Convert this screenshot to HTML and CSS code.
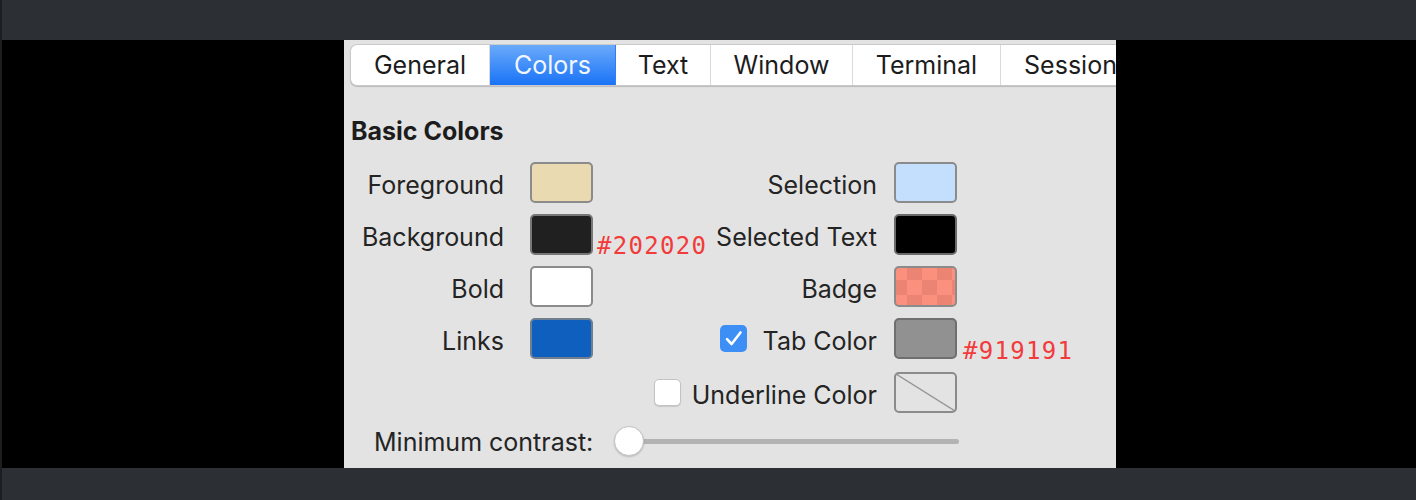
FILE: index.html
```html
<!DOCTYPE html>
<html lang="en">
<head>
<meta charset="utf-8">
<title>Colors</title>
<link rel="stylesheet" href="styles.css">
</head>
<body>
<div class="screen">
  <div class="bar"></div>
  <div class="stage">
    <div class="panel">
      <div class="tabs">
        <div class="tab tab--general">General</div>
        <div class="tab tab--colors tab--active">Colors</div>
        <div class="tab tab--text">Text</div>
        <div class="tab tab--window">Window</div>
        <div class="tab tab--terminal">Terminal</div>
        <div class="tab tab--session">Session</div>
      </div>

      <div class="heading">Basic Colors</div>

      <div class="row">
        <div class="label">Foreground</div>
        <div class="swatch swatch--fg"></div>
        <div class="mid"><span class="rlabel">Selection</span></div>
        <div class="swatch swatch--sel"></div>
      </div>

      <div class="row">
        <div class="label">Background</div>
        <div class="swatch swatch--bg"></div>
        <div class="mid">
          <span class="note note--before">#202020</span>
          <span class="rlabel">Selected Text</span>
        </div>
        <div class="swatch swatch--seltext"></div>
      </div>

      <div class="row">
        <div class="label">Bold</div>
        <div class="swatch swatch--bold"></div>
        <div class="mid"><span class="rlabel">Badge</span></div>
        <div class="swatch swatch--badge"></div>
      </div>

      <div class="row row--gap">
        <div class="label">Links</div>
        <div class="swatch swatch--links"></div>
        <div class="mid">
          <span class="check check--on">
            <svg viewBox="0 0 27 27" width="27" height="27"><path d="M7 14.2 L11.6 19 L20.5 7.5" fill="none" stroke="#fff" stroke-width="2.6" stroke-linecap="round" stroke-linejoin="round"/></svg>
          </span>
          <span class="rlabel">Tab Color</span>
        </div>
        <div class="swatch swatch--tab"></div>
        <span class="note note--after">#919191</span>
      </div>

      <div class="row">
        <div class="spacer"></div>
        <div class="mid">
          <span class="check check--off"></span>
          <span class="rlabel">Underline Color</span>
        </div>
        <div class="swatch swatch--none"></div>
      </div>

      <div class="slider-row">
        <span class="slider-label">Minimum contrast:</span>
        <div class="slider">
          <div class="track"></div>
          <div class="knob"></div>
        </div>
      </div>
    </div>
  </div>
  <div class="bar bar--bottom"></div>
</div>
</body>
</html>
```
FILE: styles.css
```css
html, body {
  margin: 0;
  padding: 0;
}

body {
  background: #000;
  font-family: Inter, "Noto Sans", sans-serif;
  color: #242424;
}

.screen {
  width: 1416px;
  height: 500px;
  box-sizing: border-box;
  border-left: 2px solid #1c1e22;
  display: flex;
  flex-direction: column;
}

.bar {
  height: 40px;
  flex: none;
  background: #2c2f34;
}

.bar--bottom {
  height: 32px;
}

.stage {
  flex: 1;
  background: #000;
  padding-left: 342px;
}

.panel {
  width: 772px;
  height: 428px;
  background: #e3e3e3;
  overflow: hidden;
}

/* Tabs */
.tabs {
  display: flex;
  width: max-content;
  margin: 4px 0 0 6px;
  height: 42px;
  box-sizing: border-box;
  background: #fff;
  border: 1px solid #c9c9c9;
  border-right: none;
  border-radius: 7px 0 0 7px;
  box-shadow: 0 1px 1px rgba(0, 0, 0, 0.18);
}

.tab {
  flex: none;
  box-sizing: border-box;
  display: flex;
  align-items: center;
  justify-content: center;
  font-size: 25px;
  color: #1c1c1c;
  border-right: 1px solid #dadada;
}

.tab--general { width: 139px; border-radius: 6px 0 0 6px; }
.tab--colors { width: 126px; }
.tab--text { width: 95px; }
.tab--window { width: 142px; }
.tab--terminal { width: 148px; }
.tab--session { width: 140px; }

.tab--active {
  background: linear-gradient(#6aaafb, #1a73f6);
  color: #f2f6ff;
  border-right-color: #2f7ff0;
}

/* Heading */
.heading {
  margin: 30px 0 16px 7px;
  font-size: 25px;
  line-height: 30px;
  font-weight: 700;
  color: #1c1c1c;
}

/* Rows */
.row {
  display: flex;
  align-items: center;
  height: 41px;
  margin-bottom: 11px;
  font-size: 25px;
}

.row--gap {
  margin-bottom: 13px;
}

.label {
  width: 160px;
  margin-right: 26px;
  padding-top: 4px;
  text-align: right;
  flex: none;
}

.spacer {
  width: 249px;
  flex: none;
}

.mid {
  width: 284px;
  height: 100%;
  flex: none;
  display: flex;
  align-items: center;
  justify-content: flex-end;
  margin-right: 17px;
}

.rlabel {
  white-space: nowrap;
  padding-top: 4px;
}

.swatch {
  flex: none;
  width: 63px;
  height: 41px;
  box-sizing: border-box;
  border: 2px solid #8b8b8b;
  border-radius: 5px;
}

.swatch--fg { background: #e9dab2; }
.swatch--bg { background: #202020; border-color: #777; }
.swatch--bold { background: #fff; }
.swatch--links { background: #0f5fbf; border-color: #6f7f90; }
.swatch--sel { background: #c3dffd; }
.swatch--seltext { background: #000; border-color: #6a6a6a; }
.swatch--badge {
  background: repeating-conic-gradient(#eb8472 0 25%, #fb907f 0 50%) -4px -3px / 30px 30px;
}
.swatch--tab { background: #919191; border-color: #6f6f6f; }
.swatch--none {
  background: linear-gradient(to top right, transparent calc(50% - 1.2px), #8b8b8b 50%, transparent calc(50% + 1.2px));
}

.note {
  font-family: "DejaVu Sans Mono", "Liberation Mono", monospace;
  font-size: 24px;
  letter-spacing: 1.3px;
  line-height: 24px;
  color: #f23b3b;
  align-self: flex-end;
  margin-bottom: -3px;
  white-space: nowrap;
}

.note--before {
  margin-left: 4px;
  margin-right: auto;
}

.note--after {
  margin-left: 6px;
  margin-bottom: -4px;
}

/* Checkboxes */
.check {
  flex: none;
  width: 27px;
  height: 27px;
  box-sizing: border-box;
  border-radius: 5px;
  display: block;
}

.check svg {
  display: block;
}

.check--on {
  background: #3d8ff6;
  margin-right: 16px;
}

.check--off {
  background: #fff;
  border: 1px solid #c3c3c3;
  box-shadow: 0 1px 1px rgba(0, 0, 0, 0.12);
  margin-right: 11px;
}

/* Slider */
.slider-row {
  display: flex;
  align-items: center;
  height: 32px;
  margin-top: 12px;
  padding-left: 30px;
  font-size: 25px;
}

.slider-label {
  white-space: nowrap;
  padding-top: 2px;
}

.slider {
  position: relative;
  width: 345px;
  height: 32px;
  margin-left: 21px;
  display: flex;
  align-items: center;
  flex: none;
}

.track {
  flex: 1;
  height: 5px;
  margin-left: 15px;
  border-radius: 3px;
  background: #b3b3b3;
}

.knob {
  position: absolute;
  left: 0;
  top: 1px;
  width: 30px;
  height: 30px;
  box-sizing: border-box;
  border-radius: 50%;
  background: #fff;
  border: 1px solid #c4c4c4;
  box-shadow: 0 1px 2px rgba(0, 0, 0, 0.2);
}
```
